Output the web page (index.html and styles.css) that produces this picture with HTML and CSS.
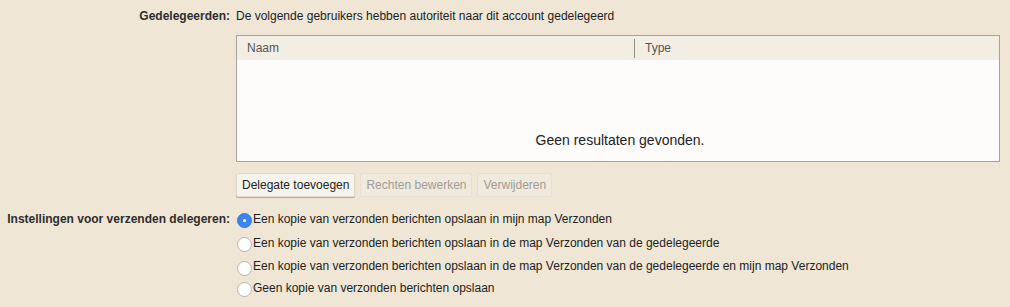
FILE: index.html
```html
<!DOCTYPE html>
<html lang="nl">
<head>
<meta charset="utf-8">
<title>Delegeren</title>
<link rel="stylesheet" href="styles.css">
</head>
<body>
<div class="form">
  <div class="label lbl-deleg"><span>Gedelegeerden:</span></div>
  <div class="field">
    <div class="intro">De volgende gebruikers hebben autoriteit naar dit account gedelegeerd</div>
    <div class="table">
      <div class="thead">
        <div class="th th-name">Naam</div>
        <div class="th th-type">Type</div>
      </div>
      <div class="tbody">
        <div class="empty">Geen resultaten gevonden.</div>
      </div>
    </div>
    <div class="buttons">
      <button class="btn">Delegate toevoegen</button>
      <button class="btn" disabled>Rechten bewerken</button>
      <button class="btn" disabled>Verwijderen</button>
    </div>
  </div>

  <div class="label lbl-send"><span>Instellingen voor verzenden delegeren:</span></div>
  <div class="field radios">
    <label class="radio"><span class="dot checked"></span>Een kopie van verzonden berichten opslaan in mijn map Verzonden</label>
    <label class="radio"><span class="dot"></span>Een kopie van verzonden berichten opslaan in de map Verzonden van de gedelegeerde</label>
    <label class="radio"><span class="dot"></span>Een kopie van verzonden berichten opslaan in de map Verzonden van de gedelegeerde en mijn map Verzonden</label>
    <label class="radio"><span class="dot"></span>Geen kopie van verzonden berichten opslaan</label>
  </div>
</div>
</body>
</html>
```

FILE: styles.css
```css
html, body {
  margin: 0;
  padding: 0;
  background: #efe6d5;
}
body {
  font-family: "Liberation Sans", Arial, sans-serif;
  font-size: 12px;
  color: #222;
}
.form {
  display: grid;
  grid-template-columns: 230px 764px;
  column-gap: 6px;
  padding: 8px 0 0 0;
}
.label {
  display: flex;
  justify-content: flex-end;
  white-space: nowrap;
  font-weight: bold;
  color: #2e2e2e;
  line-height: 15px;
}
.lbl-deleg {
  padding-top: 1px;
}
.lbl-send {
  margin-top: 3px;
}
.intro {
  line-height: 15px;
  padding-top: 1px;
}
.table {
  margin-top: 11px;
  border: 1px solid #a6a39b;
  background: #fdfcfa;
  height: 125px;
  display: flex;
  flex-direction: column;
}
.thead {
  display: flex;
  height: 24px;
  background: #f2eee4;
  color: #555;
  font-size: 12px;
}
.th {
  display: flex;
  align-items: center;
  padding-left: 10px;
}
.th-name {
  width: 388px;
  position: relative;
}
.th-name::after {
  content: "";
  position: absolute;
  right: 0;
  top: 3px;
  bottom: 2px;
  width: 1px;
  background: #8f8c84;
}
.th-type {
  flex: 1;
}
.tbody {
  flex: 1;
  display: flex;
  align-items: flex-end;
  justify-content: center;
}
.empty {
  font-size: 14px;
  color: #222;
  padding-bottom: 13px;
  padding-left: 4px;
}
.buttons {
  display: flex;
  gap: 5px;
  margin-top: 11px;
  margin-bottom: 12px;
}
.btn {
  font-family: "Liberation Sans", Arial, sans-serif;
  font-size: 12px;
  height: 24px;
  padding: 0 5px;
  background: #f7f4ee;
  border: 1px solid #ded8cc;
  border-radius: 2px;
  color: #222;
  box-shadow: 0 1px 1px rgba(0,0,0,0.25);
}
.btn:disabled {
  background: #efe9de;
  color: #a29d94;
  border-color: #e6dfd2;
  box-shadow: none;
}
.radios {
  display: flex;
  flex-direction: column;
  margin-top: -2px;
}
.radio {
  display: flex;
  align-items: center;
  height: 24px;
  line-height: 15px;
  color: #222;
  margin-left: 1px;
}
.radio:nth-child(3) {
  height: 23px;
}
.radio:last-child {
  height: 20px;
}
.dot {
  width: 13px;
  height: 13px;
  border-radius: 50%;
  background: #fff;
  border: 1px solid #b9b4aa;
  margin-right: 1px;
  margin-top: 3px;
  box-sizing: content-box;
  position: relative;
  flex: none;
}
.dot.checked {
  background: #3a84f6;
  border-color: #3479e8;
}
.dot.checked::after {
  content: "";
  position: absolute;
  left: 5px;
  top: 5px;
  width: 3px;
  height: 3px;
  border-radius: 50%;
  background: #fff;
}
```
